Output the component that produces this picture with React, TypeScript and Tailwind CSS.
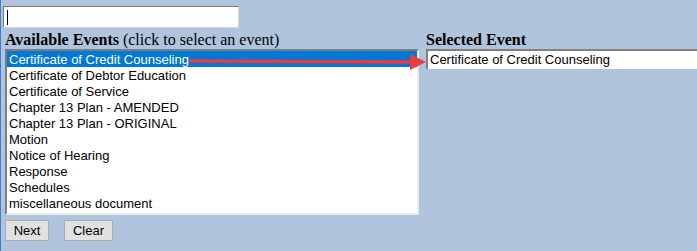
import React from "react";

const events = [
  "Certificate of Credit Counseling",
  "Certificate of Debtor Education",
  "Certificate of Service",
  "Chapter 13 Plan - AMENDED",
  "Chapter 13 Plan - ORIGINAL",
  "Motion",
  "Notice of Hearing",
  "Response",
  "Schedules",
  "miscellaneous document",
];

const App = () => {
  return (
    <div className="relative h-[251px] w-full overflow-hidden border-l border-[#3b7fd4] bg-[#b0c4de] font-['Liberation_Sans',Arial,sans-serif] text-[13px] text-black">
      <div className="pl-[2px] pt-[6px]">
        <div className="relative h-[22px] w-[236px] border border-[#7a7a7a] border-b-[#d6d6d6] border-r-[#d6d6d6] bg-white">
          <div className="absolute left-[3px] top-[3px] h-[15px] w-px bg-black" />
        </div>
      </div>

      <div className="flex pl-[4px] pt-[4px]">
        <div className="w-[414px]">
          <div className="h-[16px] font-['Liberation_Serif','Times_New_Roman',serif] text-[16px] leading-[16px]">
            <span className="font-bold">Available Events</span> (click to select an event)
          </div>
          <div className="mt-[1px] h-[166px] w-[414px] border-2 border-[#7d7d7d] border-b-[#e8e8e8] border-r-[#e8e8e8] bg-white">
            {events.map((e, i) => (
              <div
                key={e}
                className={
                  i === 0
                    ? "h-[16px] bg-[#0078d7] pl-[2px] leading-[17px] text-white"
                    : "h-[16px] pl-[2px] leading-[17px]"
                }
              >
                {e}
              </div>
            ))}
          </div>
        </div>

        <div className="ml-[7px] flex-1">
          <div className="h-[16px] font-['Liberation_Serif','Times_New_Roman',serif] text-[16px] font-bold leading-[16px]">
            Selected Event
          </div>
          <div className="mt-[1px] h-[20px] border-l-2 border-t-2 border-[#808080] bg-white pl-[2px] leading-[17px]">
            Certificate of Credit Counseling
          </div>
        </div>
      </div>

      <div className="flex gap-[15px] pl-[4px] pt-[5px]">
        <button className="h-[21px] w-[44px] border border-[#adadad] bg-[#e1e1e1] leading-[19px]">
          Next
        </button>
        <button className="h-[21px] w-[49px] border border-[#adadad] bg-[#e1e1e1] leading-[19px]">
          Clear
        </button>
      </div>

      <svg
        className="absolute left-[188px] top-[53px]"
        width="240"
        height="18"
        viewBox="0 0 240 18"
      >
        <line x1="2" y1="8" x2="224" y2="9" stroke="#ee3b3f" strokeWidth="3.5" strokeLinecap="round" />
        <polygon points="221,1 237,9 221,17" fill="#ee3b3f" />
      </svg>
    </div>
  );
};

export default App;
